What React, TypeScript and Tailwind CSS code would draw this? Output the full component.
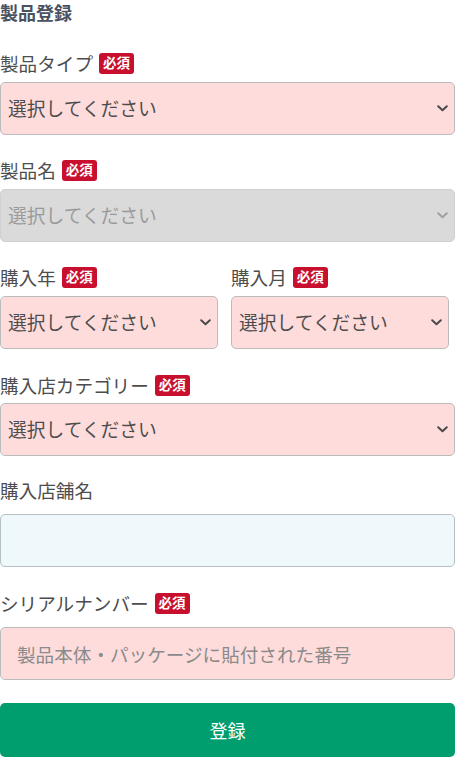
import React from "react";

const Chevron = ({ color = "#4a4a4a" }: { color?: string }) => (
  <svg width="11" height="7" viewBox="0 0 11 7" fill="none" className="shrink-0">
    <path d="M1.2 1.2 L5.5 5.3 L9.8 1.2" stroke={color} strokeWidth="2" strokeLinecap="round" strokeLinejoin="round" />
  </svg>
);

const Badge = () => (
  <span className="ml-[6px] inline-flex h-[21px] w-[35px] items-center justify-center rounded-[3px] bg-[#c8102e] text-[13.5px] font-bold leading-none text-white">
    必須
  </span>
);

const Label = ({ text, required }: { text: string; required?: boolean }) => (
  <div className="flex h-[22px] items-center text-[18.6px] leading-none text-[#4d4d4d]">
    <span>{text}</span>
    {required && <Badge />}
  </div>
);

const Select = ({ disabled, className = "" }: { disabled?: boolean; className?: string }) => (
  <div
    className={
      "flex h-[53px] items-center justify-between rounded-[5px] border pl-[7px] pr-[6px] text-[18.75px] " +
      (disabled
        ? "border-[#d0d0d0] bg-[#dadada] text-[#9a9a9a] "
        : "border-[#bcbcbc] bg-[#ffdcdc] text-[#4d4d4d] ") +
      className
    }
  >
    <span>選択してください</span>
    <Chevron color={disabled ? "#a0a0a0" : "#4a4a4a"} />
  </div>
);

export default function App() {
  return (
    <div
      className="w-[456px] bg-white pr-px"
      style={{ fontFamily: '"Noto Sans CJK JP", "Noto Sans", sans-serif' }}
    >
      <h1 className="h-[24px] text-[18px] font-bold leading-[24px] text-[#4a5260]">製品登録</h1>

      <div className="mt-[28px]">
        <Label text="製品タイプ" required />
        <div className="mt-2">
          <Select />
        </div>
      </div>

      <div className="mt-6">
        <Label text="製品名" required />
        <div className="mt-2">
          <Select disabled />
        </div>
      </div>

      <div className="mt-6 flex gap-[13px]">
        <div className="w-[218px]">
          <Label text="購入年" required />
          <div className="mt-2">
            <Select />
          </div>
        </div>
        <div className="w-[218px]">
          <Label text="購入月" required />
          <div className="mt-2">
            <Select />
          </div>
        </div>
      </div>

      <div className="mt-[25px]">
        <Label text="購入店カテゴリー" required />
        <div className="mt-[7px]">
          <Select />
        </div>
      </div>

      <div className="mt-[23px]">
        <Label text="購入店舗名" />
        <div className="mt-[13px] h-[53px] rounded-[5px] border border-[#b4c0c6] bg-[#eff8fb]" />
      </div>

      <div className="mt-[25px]">
        <Label text="シリアルナンバー" required />
        <div className="mt-[13px] flex h-[53px] items-center rounded-[5px] border border-[#bcbcbc] bg-[#ffdcdc] pl-[16px] text-[18.6px] text-[#8a8a8a]">
          製品本体・パッケージに貼付された番号
        </div>
      </div>

      <button className="mt-[23px] flex h-[54px] w-full items-center justify-center rounded-[5px] bg-[#009e6e] text-[18px] text-white">
        登録
      </button>
    </div>
  );
}
